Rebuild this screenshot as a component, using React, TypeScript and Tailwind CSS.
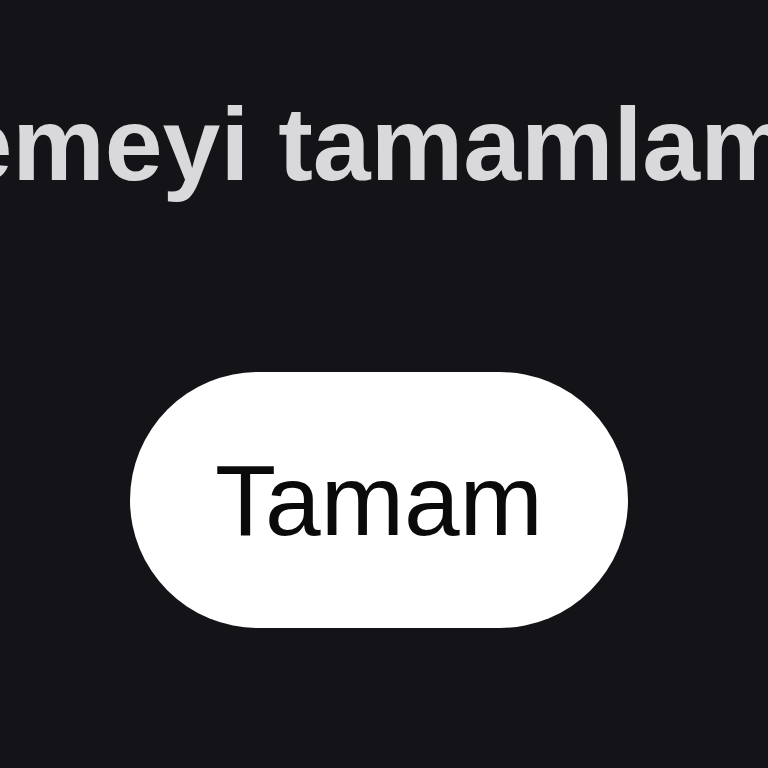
export default function App() {
    return (
        <div className="w-[768px] h-[768px] overflow-hidden bg-[#131318] flex flex-col font-['Liberation_Sans',Arial,sans-serif]">
            <div className="pt-[92px] whitespace-nowrap ml-[-190px]">
                <span className="block text-[104px] leading-none font-bold text-[#d9d9dc]">
                    Ödemeyi tamamlamak için
                </span>
            </div>
            <button className="mt-[176px] ml-[130px] w-[498px] h-[256px] rounded-full bg-white flex items-center justify-center shrink-0">
                <span className="text-[100px] leading-none text-[#0a0a0a]">Tamam</span>
            </button>
        </div>
    );
}
